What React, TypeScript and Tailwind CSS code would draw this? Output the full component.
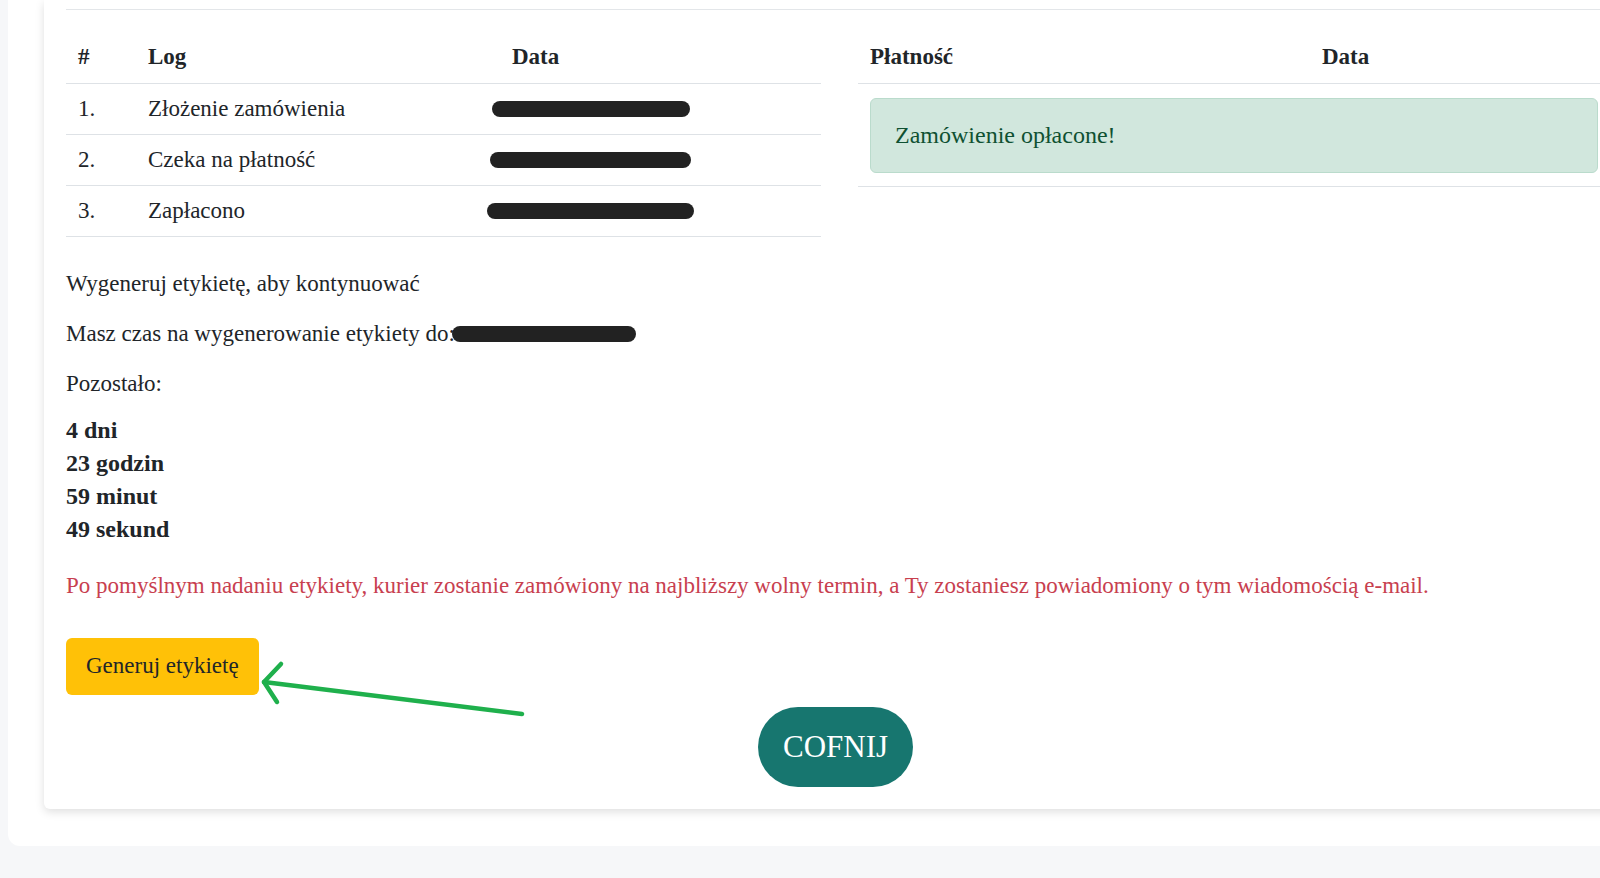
export default function App() {
  const logs = [
    { n: "1.", label: "Złożenie zamówienia", bar: "ml-[-20px] w-[198px]" },
    { n: "2.", label: "Czeka na płatność", bar: "ml-[-22px] w-[201px]" },
    { n: "3.", label: "Zapłacono", bar: "ml-[-25px] w-[207px]" },
  ];

  return (
    <div className="h-[878px] w-[1600px] overflow-hidden bg-[#f6f7f9] font-['Liberation_Serif',serif] text-[23px] text-[#212529]">
      <div className="ml-2 w-[1660px] rounded-bl-[12px] bg-white pb-[37px]">
        <div className="relative ml-9 w-[1620px] rounded-b-md bg-white px-[22px] pt-[9px] pb-[22px] shadow-[0_3px_10px_rgba(0,0,0,0.13)]">
          <div className="border-t border-[#e3e6e9]" />

          {/* Tables */}
          <div className="mt-[21px] flex items-start gap-[37px]">
            <table className="w-[755px] border-collapse text-left">
              <thead>
                <tr className="border-b border-[#dee2e6]">
                  <th className="w-[70px] px-3 py-[9px] font-bold leading-[34px]">#</th>
                  <th className="w-[364px] px-3 py-[9px] font-bold leading-[34px]">Log</th>
                  <th className="px-3 py-[9px] font-bold leading-[34px]">Data</th>
                </tr>
              </thead>
              <tbody>
                {logs.map((l) => (
                  <tr key={l.n} className="border-b border-[#dee2e6]">
                    <td className="px-3 py-2 leading-[34px]">{l.n}</td>
                    <td className="px-3 py-2 leading-[34px]">{l.label}</td>
                    <td className="px-3 py-2 leading-[34px]">
                      <div className={`h-4 rounded-full bg-[#222] ${l.bar}`} />
                    </td>
                  </tr>
                ))}
              </tbody>
            </table>

            <table className="w-[782px] border-collapse text-left">
              <thead>
                <tr className="border-b border-[#dee2e6]">
                  <th className="w-[452px] px-3 py-[9px] font-bold leading-[34px]">Płatność</th>
                  <th className="px-3 py-[9px] font-bold leading-[34px]">Data</th>
                </tr>
              </thead>
              <tbody>
                <tr className="border-b border-[#dee2e6]">
                  <td colSpan={2} className="pt-[14px] pr-[42px] pb-[13px] pl-3">
                    <div className="rounded-md border border-[#badbcc] bg-[#d1e7dd] px-6 py-5 text-[24px] leading-[33px] text-[#0f5132]">
                      Zamówienie opłacone!
                    </div>
                  </td>
                </tr>
              </tbody>
            </table>
          </div>

          {/* Info */}
          <div className="mt-[30px]">
            <p className="mb-4 leading-[34px]">Wygeneruj etykietę, aby kontynuować</p>
            <p className="mb-4 flex items-center leading-[34px]">
              Masz czas na wygenerowanie etykiety do:
              <span className="ml-[-3px] inline-block h-4 w-[184px] rounded-full bg-[#222]" />
            </p>
            <p className="mb-[13px] leading-[34px]">Pozostało:</p>
            <div className="mb-[23px] text-[24px] font-bold leading-[33px]">
              <div>4 dni</div>
              <div>23 godzin</div>
              <div>59 minut</div>
              <div>49 sekund</div>
            </div>
            <p className="mb-[35px] leading-[34px] text-[#c8404f]">
              Po pomyślnym nadaniu etykiety, kurier zostanie zamówiony na najbliższy wolny termin, a Ty zostaniesz powiadomiony o tym wiadomością e-mail.
            </p>
          </div>

          <button className="h-[57px] rounded-md bg-[#ffc107] px-5 text-[23px] text-[#212529]">Generuj etykietę</button>

          <div className="mt-3 flex w-[1539px] justify-center">
            <button className="h-20 w-[155px] rounded-full bg-[#17766f] text-[31px] text-white">COFNIJ</button>
          </div>

          {/* annotation arrow */}
          <svg
            className="pointer-events-none absolute left-[200px] top-[650px]"
            width="300"
            height="80"
            viewBox="0 0 300 80"
            fill="none"
            stroke="#1fb04c"
            strokeWidth="4.5"
            strokeLinecap="round"
            strokeLinejoin="round"
          >
            <path d="M278 64 L20 32" />
            <path d="M37 14 L20 32 L33 52" />
          </svg>
        </div>
      </div>
    </div>
  );
}
